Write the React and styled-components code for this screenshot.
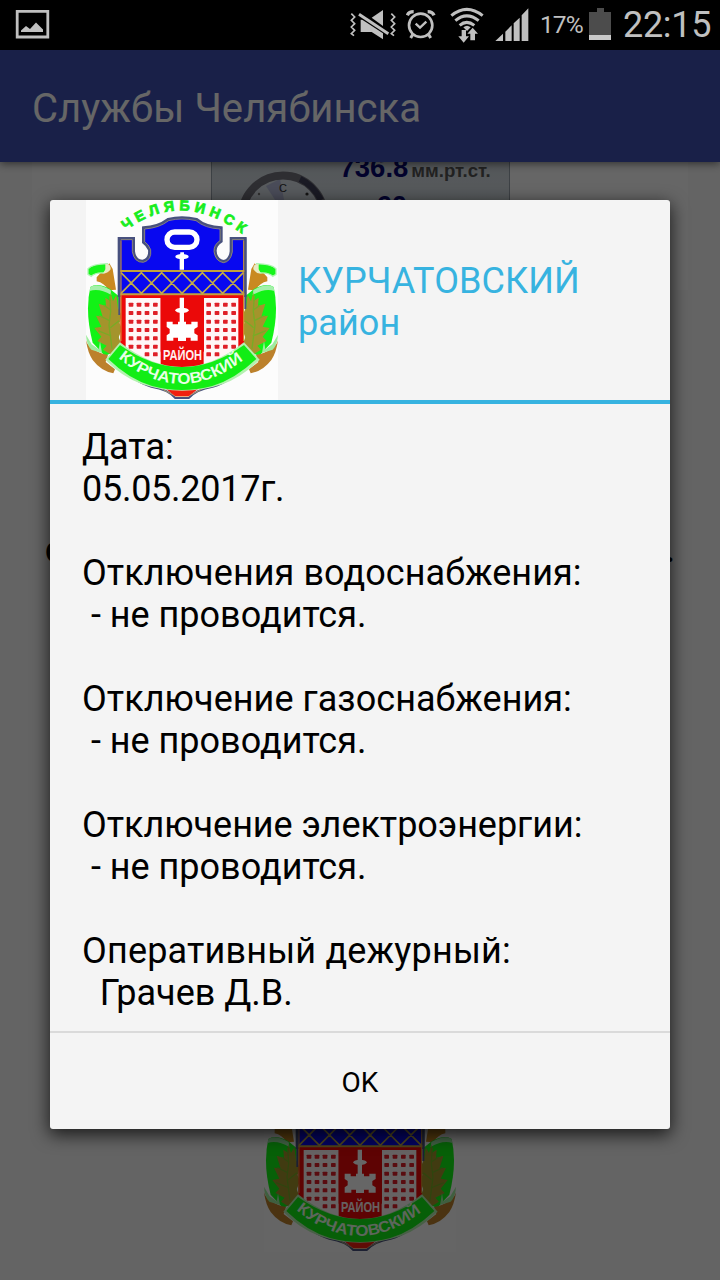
import React from "react";
import styled, { createGlobalStyle } from "styled-components";

const GlobalStyle = createGlobalStyle`
  * { box-sizing: border-box; }
  body { margin: 0; background: #000; font-family: Roboto, "Liberation Sans", sans-serif; }
  svg { display: block; flex: none; }
`;

const Screen = styled.div`
  position: relative;
  display: flex;
  flex-direction: column;
  width: 720px;
  height: 1280px;
  overflow: hidden;
  background: #fafafa;
`;

const StatusBar = styled.header`
  display: flex;
  align-items: center;
  justify-content: space-between;
  flex: none;
  height: 50px;
  padding: 0 8px 0 15px;
  background: #000;
  color: #c0c0c0;
`;

const StatusGroup = styled.div`
  display: flex;
  align-items: center;
  height: 50px;
`;

const IconGap = styled.span`
  flex: none;
  width: ${({ $w }) => $w}px;
`;

const BatteryText = styled.span`
  width: 42px;
  margin: 0 7px 0 11px;
  font-size: 24.5px;
  line-height: 50px;
  letter-spacing: -0.9px;
  white-space: nowrap;
`;

const Clock = styled.span`
  width: 89px;
  margin-left: 11px;
  font-size: 36px;
  line-height: 49px;
  letter-spacing: -0.3px;
  white-space: nowrap;
`;

const Toolbar = styled.div`
  display: flex;
  align-items: center;
  flex: none;
  height: 112px;
  padding: 4px 32px 0;
  background: #3f51b5;
  box-shadow: 0 2px 8px rgba(0, 0, 0, 0.5);
  z-index: 1;
`;

const AppTitle = styled.h1`
  margin: 0;
  color: #fff;
  font-size: 40px;
  font-weight: 400;
  letter-spacing: 0.08px;
  white-space: nowrap;
`;

const Content = styled.main`
  display: flex;
  flex: 1;
  flex-direction: column;
  align-items: center;
  min-height: 0;
  overflow: hidden;
`;

const WeatherCard = styled.section`
  display: flex;
  justify-content: center;
  flex: none;
  width: 656px;
  height: 128px;
  background: #fff;
`;

const WeatherWidget = styled.div`
  display: flex;
  width: 299px;
  height: 100px;
  overflow: hidden;
  border: 1px solid #98a3ad;
  border-top: 0;
  background: linear-gradient(#d2dae0, #e4ebf0);
`;

const Readings = styled.div`
  display: flex;
  flex-direction: column;
  width: 165px;
  margin-top: -10px;
`;

const Pressure = styled.div`
  display: flex;
  align-items: baseline;
  gap: 3px;
  height: 38px;
  color: #555;
  font: 700 18.6px/31px "Liberation Sans", sans-serif;
  white-space: nowrap;
  b { color: #080870; font-size: 27.5px; }
`;

const Humidity = styled.b`
  margin-left: 37px;
  color: #080870;
  font: 700 27.5px/32px "Liberation Sans", sans-serif;
`;

const Heading = styled.div`
  display: flex;
  justify-content: space-between;
  flex: none;
  width: 630px;
  margin-top: 240px;
  color: #000;
  font-size: 36px;
  font-weight: 500;
  line-height: 40px;
`;

const DistrictEmblem = styled.div`
  margin-top: 482px;
`;

const Scrim = styled.div`
  position: absolute;
  inset: 50px 0 0;
  z-index: 2;
  background: rgba(0, 0, 0, 0.6);
`;

const Dialog = styled.section`
  position: absolute;
  top: 200px;
  left: 50px;
  z-index: 3;
  display: flex;
  flex-direction: column;
  width: 620px;
  height: 929px;
  overflow: hidden;
  border-radius: 3px;
  background: #f4f4f4;
`;

const DialogShadow = styled.div`
  position: absolute;
  top: 200px;
  left: 50px;
  z-index: 2;
  width: 620px;
  height: 929px;
  border-radius: 4px;
  box-shadow: 0 5px 17px 1px rgba(0, 0, 0, 0.72);
`;

const DialogHeader = styled.div`
  display: flex;
  align-items: center;
  flex: none;
  gap: 20px;
  height: 204px;
  padding-left: 36px;
  border-bottom: 4px solid #37b3e0;
`;

const DialogTitle = styled.h2`
  margin: 3px 0 0;
  color: #37b3e0;
  font-size: 36px;
  font-weight: 400;
  line-height: 42px;
  letter-spacing: 0.08px;
`;

const DialogBody = styled.div`
  flex: none;
  height: 627px;
  padding: 22px 32px 0;
  color: #000;
  font-size: 36px;
  line-height: 42px;
`;

const Line = styled.div`
  height: 42px;
  letter-spacing: ${({ $track = 0 }) => $track}px;
  white-space: pre;
`;

const DialogButton = styled.button`
  flex: 1;
  padding: 2px 0 0;
  border: 0;
  border-top: 2px solid #dadada;
  background: transparent;
  color: #000;
  font: 400 28px Roboto, sans-serif;
`;

const PictureIcon = () => (
  <svg width="35" height="32" viewBox="0 0 35 32">
    <path d="M2.2 2.4H32.8V28H2.2Z" fill="none" stroke="#c0c0c0" strokeWidth="2.8" />
    <path d="M6 23V21.5L11 17L15 20L21 13.5L28 20.5V23Z" fill="#c0c0c0" />
  </svg>
);

const MutedIcon = () => (
  <svg width="46" height="32" viewBox="30 24 138 96" fill="#c0c0c0">
    <path d="M34 38L44 48L34 58L44 68L34 78L44 88L34 98L42 104M154 38L164 48L154 58L164 68L154 78L164 88L154 98L162 104" fill="none" stroke="#c0c0c0" strokeWidth="5" />
    <path d="M62 56H84L129 90V115L95 93H62Z" />
    <path d="M95 50L129 27V75Z" />
    <path d="M55 39L147 99" stroke="#000" strokeWidth="16" />
    <path d="M57 40L145 98" stroke="#c0c0c0" strokeWidth="9" />
  </svg>
);

const AlarmIcon = () => (
  <svg width="30" height="30" viewBox="199 27 90 90" fill="none" stroke="#c0c0c0">
    <circle cx="243" cy="73" r="35" strokeWidth="8" />
    <path d="M203 43Q207 32 222 32M264 32Q279 32 283 43" strokeWidth="10" />
    <path d="M228 68L241 80L260 62" strokeWidth="7" />
    <path d="M220 99L213 111M266 99L273 111" strokeWidth="9" />
  </svg>
);

const WifiIcon = () => (
  <svg width="34" height="36" viewBox="330 18 102 108" fill="none" stroke="#c0c0c0">
    <path d="M334 44Q380 6 428 44M346 59Q380 30 416 59M359 73Q380 55 403 73" strokeWidth="9" />
    <path d="M370 79Q381 70 392 79L381 90Z" fill="#c0c0c0" stroke="none" />
    <path d="M365 87H378V106H387L371 125L355 106H365ZM391 118V98H382L398 80L414 98H405V118Z" fill="#c0c0c0" stroke="none" />
  </svg>
);

const SignalIcon = () => (
  <svg width="34" height="34" viewBox="467 26 102 102" fill="#c0c0c0">
    <path d="M468 125L491 103V125ZM498 97L517 78V125H498ZM523 72L541 55V125H523ZM547 48L567 27V125H547Z" />
  </svg>
);

const BatteryIcon = () => (
  <svg width="23" height="34" viewBox="0 0 23 34">
    <path d="M0 4H8V0H15V4H22V32H0Z" fill="#4c4c4c" />
    <path d="M0 27H22V32H0Z" fill="#c9c9c9" />
  </svg>
);

const Gauge = () => (
  <svg width="128" height="100" viewBox="0 0 128 100">
    <circle cx="71" cy="55" r="38" fill="#dce3ea" />
    <path d="M54 24L68 17L76 58Z" fill="#afb5dc" opacity=".8" />
    <circle cx="71" cy="54.5" r="41" fill="none" stroke="#74747e" strokeWidth="8" />
    <path d="M88 17Q101 23 109 38" fill="none" stroke="#41415a" strokeWidth="6" />
    <text x="67" y="30" fontSize="11" fontFamily="Liberation Sans" fill="#333">C</text>
    <circle cx="95" cy="32" r="1.6" fill="#333" />
    <circle cx="47" cy="32" r="1.2" fill="#777" />
  </svg>
);

const Windows = ({ columns }) => (
  <g fill="#df2028">
    {columns.map((x, c) =>
      [329, 354, 380, 405, 430, 455, 478].map((y, r) =>
        (r === 6 && ((columns[0] < 200 && c < 2) || (columns[0] > 300 && c > 1))) ? null : (
          <rect key={`${x}-${y}`} x={x - 7} y={y - 6} width="14" height="12" rx="2" />
        )
      )
    )}
  </g>
);

const Garland = () => (
  <g>
    <path d="M50 247L88 205L98 222L108 284L86 286Q72 263 50 259Z" fill="#c98921" />
    <path d="M24 221Q38 207 82 206L86 223L70 234Q47 232 34 244L24 238Z" fill="#16f51b" stroke="#b1f4b3" strokeWidth="4" />
    <path d="M76 207Q93 206 92 223Q82 237 70 235L76 223Z" fill="#e9eac4" />
    <path d="M31 276Q52 262 90 282L116 303V464L75 483L38 443Q14 350 31 276Z" fill="#12f216" />
    <path d="M31 276Q52 262 92 285L94 300Q57 278 29 288Z" fill="#a4f0aa" />
    <path d="M91 291L99 318L109 301L114 339L125 361L119 384L126 403L116 427L126 452L91 478L69 464L80 452L52 438L64 425L43 399L64 395L48 362L68 365L56 326L78 333L76 308L91 318Z" fill="#a4942c" />
    <path d="M89 302L92 349L87 390L96 461M92 345L72 331M89 377L58 362M91 398L117 377M94 423L54 407" fill="none" stroke="#77ac25" strokeWidth="4" />
    <path d="M17 430Q21 465 84 480L77 501L105 523L100 535Q63 528 38 495Q22 471 17 430Z" fill="#bc812c" />
    <path d="M18 419L35 448L56 463L60 439L66 474L34 464Q19 448 18 419Z" fill="#9eed9e" />
  </g>
);

const Emblem = ({ id }) => (
  <svg width="192" height="200" viewBox="18 15 576 600">
    <rect x="18" y="15" width="576" height="600" fill="#fcfcfc" />
    <Garland />
    <g transform="translate(612 0) scale(-1 1)"><Garland /></g>
    <path d="M137 518Q157 559 214 575Q265 583 286 609H326Q349 583 398 575Q456 558 479 518" fill="#fcfcfc" stroke="#48517e" strokeWidth="6" />
    <path d="M146 536Q185 570 240 579L288 604H324L372 579Q428 569 468 536" fill="none" stroke="#d8be62" strokeWidth="2" />
    <path d="M251 577H361L326 604H286Z" fill="#f02010" />
    <path d="M117 130H161V169Q165 199 188 198Q211 193 208 164Q202 150 190 142V98Q234 96 264 73Q305 62 350 73Q377 96 424 98V139Q405 151 406 168Q408 195 430 199Q450 196 453 169V130H496V302H117Z" fill="#0808f0" stroke="#48517e" strokeWidth="8" />
    <path d="M122 134H157V170Q163 203 190 202Q216 195 212 164Q206 148 194 140V102Q238 99 266 77Q305 67 348 77Q375 100 420 102V137Q401 149 402 170Q407 199 430 203Q451 201 457 171V134H492" fill="none" stroke="#b9ac62" strokeWidth="2" />
    <rect x="121" y="300" width="371" height="170" fill="#eb0909" />
    <path d="M118 228H496M118 298H496" stroke="#c1a13c" strokeWidth="6" />
    <path d="M123 233L184 295L245 233L306 295L367 233L428 295L490 233M123 295L184 233L245 295L306 233L367 295L428 233L490 295" fill="none" stroke="#c1ab49" strokeWidth="5" />
    <path d="M118 130V360M496 130V342" stroke="#48517e" strokeWidth="6" />
    <path d="M123 136V438M491 136V438" stroke="#d69a31" strokeWidth="3" />
    <path d="M137 309H242V520L137 471ZM372 309H475V471L372 520Z" fill="#fff7f7" />
    <Windows columns={[153, 177, 201, 226]} />
    <Windows columns={[386, 411, 436, 461]} />
    <path d="M242 302H371V523H242Z" fill="#eb0909" />
    <rect x="261" y="111" width="90" height="46" rx="23" fill="#0808e6" stroke="#fff" strokeWidth="16" />
    <path d="M301 172H312V224H299V190ZM299 308H312V388H299Z" fill="#fff" />
    <ellipse cx="306" cy="185" rx="20" ry="8" fill="#fff" />
    <ellipse cx="306" cy="346" rx="20" ry="8" fill="#fff" />
    <path d="M260 380H278V388H294V380H318V388H334V380H353V396L343 402V415L353 421V437H332V428H318V438H294V428H280V437H260V421L269 415V402L260 396Z" fill="#fff" />
    <text x="249" y="494" textLength="117" lengthAdjust="spacingAndGlyphs" fontFamily="Liberation Sans" fontSize="43" fontWeight="700" fill="#fff0f0">РАЙОН</text>
    <path d="M120 442Q306 590 492 442L539 494Q487 545 427 568Q306 607 187 568Q125 545 76 494Z" fill="#b4f1b0" />
    <path d="M120 450Q306 582 492 450L529 492Q465 553 397 573Q306 597 216 573Q146 552 85 492Z" fill="#12ed15" />
    <path id={`${id}-ribbon`} d="M115 489Q306 647 504 484" fill="none" />
    <text fontFamily="Liberation Sans" fontSize="46" fontWeight="700" fill="#e9ffe7">
      <textPath href={`#${id}-ribbon`} textLength="412" lengthAdjust="spacingAndGlyphs">КУРЧАТОВСКИЙ</textPath>
    </text>
    <path id={`${id}-city`} d="M137 107Q303 -18 483 114" fill="none" />
    <text fontFamily="Liberation Sans" fontSize="43" fontWeight="700" fill="#18ed20" stroke="#18ed20" strokeWidth="2.5">
      <textPath href={`#${id}-city`} textLength="380">ЧЕЛЯБИНСК</textPath>
    </text>
  </svg>
);

const message = [
  { text: "Дата:" },
  { text: "05.05.2017г.", track: -0.27 },
  { text: "" },
  { text: "Отключения водоснабжения:", track: 0.07 },
  { text: " - не проводится." },
  { text: "" },
  { text: "Отключение газоснабжения:", track: 0.05 },
  { text: " - не проводится." },
  { text: "" },
  { text: "Отключение электроэнергии:", track: -0.04 },
  { text: " - не проводится." },
  { text: "" },
  { text: "Оперативный дежурный:", track: 0.18 },
  { text: "  Грачев Д.В." },
];

export default function App() {
  return (
    <Screen>
      <GlobalStyle />
      <StatusBar>
        <PictureIcon />
        <StatusGroup>
          <MutedIcon />
          <IconGap $w={10} />
          <AlarmIcon />
          <IconGap $w={14} />
          <WifiIcon />
          <IconGap $w={11} />
          <SignalIcon />
          <BatteryText>17%</BatteryText>
          <BatteryIcon />
          <Clock>22:15</Clock>
        </StatusGroup>
      </StatusBar>
      <Toolbar><AppTitle>Службы Челябинска</AppTitle></Toolbar>
      <Content>
        <WeatherCard>
          <WeatherWidget>
            <Gauge />
            <Readings>
              <Pressure><b>736.8</b>мм.рт.ст.</Pressure>
              <Humidity>60</Humidity>
            </Readings>
          </WeatherWidget>
        </WeatherCard>
        <Heading><span>с</span><span>.</span></Heading>
        <DistrictEmblem><Emblem id="page" /></DistrictEmblem>
      </Content>
      <Scrim />
      <DialogShadow />
      <Dialog role="dialog">
        <DialogHeader>
          <Emblem id="dialog" />
          <DialogTitle>КУРЧАТОВСКИЙ<br />район</DialogTitle>
        </DialogHeader>
        <DialogBody>
          {message.map(({ text, track }, i) => <Line key={i} $track={track}>{text}</Line>)}
        </DialogBody>
        <DialogButton>OK</DialogButton>
      </Dialog>
    </Screen>
  );
}
